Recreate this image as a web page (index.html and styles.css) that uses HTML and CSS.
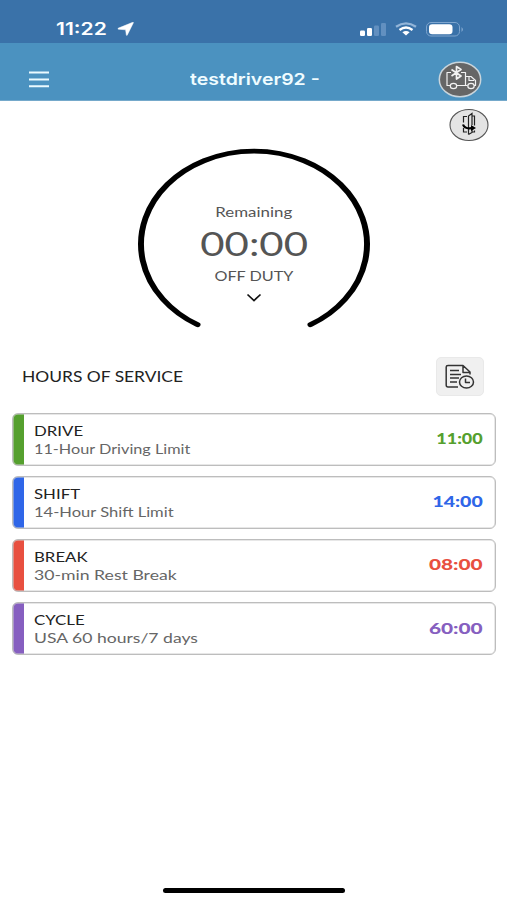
FILE: index.html
```html
<!DOCTYPE html>
<html lang="en">
<head>
<meta charset="utf-8">
<title>Hours of Service</title>
<link rel="stylesheet" href="styles.css">
</head>
<body>
<div class="status">
  <span class="wide clock">11:22</span>
  <svg class="arrow" width="18" height="14" viewBox="0 0 18 14"><path d="M16.500 .6 10.200 13.200Q9.600 13.800 9.300 12.800L8.600 7.800 1.400 7.200Q.2 6.700 1.500 6.100L15.800 .3Z" fill="#fff" stroke="#fff" stroke-width=".5"/></svg>
  <svg class="signals" width="106" height="18" viewBox="0 0 106 18">
    <g fill="#fff"><rect x="0" y="9.500" width="5" height="5.500" rx="1.200"/><rect x="7" y="7" width="5" height="8" rx="1.200"/></g>
    <g fill="#6290c0"><rect x="14" y="4.500" width="5" height="10.500" rx="1.200"/><rect x="21" y="2" width="5" height="13" rx="1.200"/></g>
    <g fill="none" stroke="#fff" stroke-width="2.300"><path d="M36 5.700Q46 -1 56 5.700" stroke="#93b5d8"/><path d="M39.500 9Q46 4 52.500 9"/></g>
    <path d="M42.400 11.200Q46 8.700 49.600 11.200L46 14.500Z" fill="#fff"/>
    <rect x="66.500" y="1.500" width="33" height="13.500" rx="4.500" fill="none" stroke="#7ea5ce"/>
    <rect x="69" y="3.300" width="23.500" height="10" rx="3.200" fill="#fff"/>
    <path d="M101.500 6Q104.500 8.500 101.500 11Z" fill="#7ea5ce"/>
  </svg>
</div>
<header class="bar">
  <svg class="menu" width="20" height="17" viewBox="0 0 20 17"><path d="M0 1.500H20M0 8.500H20M0 15.200H20" stroke="#eafaff" stroke-width="2"/></svg>
  <span class="wide title">testdriver92 -</span>
  <svg class="truck" width="44" height="37" viewBox="0 0 44 37">
    <ellipse cx="22" cy="18.500" rx="20.700" ry="17.200" fill="#666" stroke="#c9d5dc" stroke-width="1.500"/>
    <g fill="none" stroke="#f2f2f2" stroke-width="1.200" stroke-linejoin="round">
      <path d="M13 11.500H9V24.500H12M19 24.500H29.500M23 11.500H27.500V24.500M27.500 15.500H33L37.500 19.500V24.500H36M31 16V19.500H36"/>
      <ellipse cx="15.500" cy="25" rx="3.200" ry="2.700"/><ellipse cx="33" cy="25" rx="3.200" ry="2.700"/>
      <path d="M13.500 8.500 23 15 18.500 18V5.500L23 8.500 13.500 15" stroke-width="1.700"/>
    </g>
  </svg>
</header>
<div class="tools">
  <svg width="40" height="34" viewBox="0 0 40 34">
    <ellipse cx="20" cy="17" rx="19" ry="15.500" fill="#e4e4e4" stroke="#555" stroke-width="1.100"/>
    <g fill="none" stroke="#222" stroke-width="1.200">
      <path d="M18 8.500H14.500V14.500M14.500 20V24H18M19.500 26.500V8L23 5.500V17M19.500 26.500 23 24.500V22M23 8H25.500V17.500M25.500 22.500V24H23"/>
      <path d="M14 16.500Q15.500 21 22.500 20.200" stroke="#000" stroke-width="2.200"/><path d="M22 17 27 20 22 23Z" fill="#000" stroke="none"/>
    </g>
  </svg>
</div>
<section class="dial">
  <svg class="ring" width="240" height="184" viewBox="0 0 240 184"><path transform="translate(120 98) scale(1.215 1)" d="M-46.500 80.700A93 93 0 1 1 46.500 80.700" fill="none" stroke="#000" stroke-width="4.900" stroke-linecap="round"/></svg>
  <div class="readout">
    <span class="wide remaining">Remaining</span>
    <span class="wide time">00:00</span>
    <span class="wide duty">OFF DUTY</span>
    <svg class="chevron" width="16" height="10" viewBox="0 0 16 10"><path d="M1.500 1.500 8 7.500 14.500 1.500" fill="none" stroke="#111" stroke-width="1.700"/></svg>
  </div>
</section>
<div class="heading">
  <span class="wide hos">HOURS OF SERVICE</span>
  <button class="log" aria-label="Logs">
    <svg width="30" height="26" viewBox="0 0 30 26"><g fill="none" stroke="#333" stroke-width="1.500" stroke-linejoin="round">
      <path d="M13 23H3Q1.200 23 1.200 21V3Q1.200 1.500 3 1.500H18L25 8V10.500M18 1.500V8.500H25M5 6.500H14M5 10.500H16M5 14H14M5 18H12"/>
      <ellipse cx="21.500" cy="18" rx="7" ry="6"/><path d="M20.500 14.500V18.500H25"/>
    </g></svg>
  </button>
</div>
<main class="cards">
  <article class="card drive"><div class="info"><span class="wide name">DRIVE</span><span class="wide note">11-Hour Driving Limit</span></div><span class="wide value">11:00</span></article>
  <article class="card shift"><div class="info"><span class="wide name">SHIFT</span><span class="wide note">14-Hour Shift Limit</span></div><span class="wide value">14:00</span></article>
  <article class="card break"><div class="info"><span class="wide name">BREAK</span><span class="wide note">30-min Rest Break</span></div><span class="wide value">08:00</span></article>
  <article class="card cycle"><div class="info"><span class="wide name">CYCLE</span><span class="wide note">USA 60 hours/7 days</span></div><span class="wide value">60:00</span></article>
</main>
<footer class="home"><div class="indicator"></div></footer>
</body>
</html>
```
FILE: styles.css
```css
* { box-sizing: border-box; }
body {
  margin: 0;
  width: 507px;
  height: 900px;
  overflow: hidden;
  display: flex;
  flex-direction: column;
  background: #fff;
  font-family: Lato, "Liberation Sans", sans-serif;
}
svg { display: block; flex: none; }
.wide {
  display: inline-block;
  white-space: nowrap;
  transform: scaleX(var(--stretch, 1.2));
  transform-origin: left center;
}
.status {
  flex: none;
  height: 43px;
  padding: 15px 41px 0 56px;
  display: flex;
  align-items: flex-start;
  background: #3a72a9;
  color: #fff;
}
.clock { width: 61px; font: 600 17px/28px Inter, sans-serif; --stretch: 1.24; }
.arrow { margin-top: 7px; }
.signals { margin: 6px 0 0 auto; }
.bar {
  flex: none;
  height: 58px;
  padding: 0 25px 0 29px;
  display: flex;
  align-items: center;
  justify-content: space-between;
  background: #4b92c0;
  border-bottom: 1px solid #75a9cb;
  color: #effcff;
}
.menu { margin: 15px 24px 0 0; }
.title { margin: 15px 2px 0 0; font: 600 16.5px/22px Inter, sans-serif; transform-origin: center; --stretch: 1.18; }
.truck { margin-top: 15px; }
.tools { display: flex; justify-content: flex-end; height: 45px; padding: 7px 18px 0 0; }
.dial { display: grid; justify-items: center; height: 186px; }
.ring, .readout { grid-area: 1 / 1; }
.readout { display: flex; flex-direction: column; align-items: center; padding-top: 57px; color: #555; }
.readout .wide { transform-origin: center; }
.remaining { font-size: 13.5px; line-height: 18px; --stretch: 1.25; }
.time { font-size: 32px; line-height: 38px; margin: 4px 0 0 1px; --stretch: 1.31; }
.duty { font-size: 13.5px; line-height: 18px; margin-top: 4px; }
.chevron { margin-top: 8px; }
.heading { display: flex; justify-content: space-between; padding: 25px 23px 0 22px; height: 80.5px; color: #222; }
.hos { font-size: 14.5px; line-height: 39px; }
.log {
  width: 48px;
  height: 39px;
  padding: 0;
  border: 1px solid #e9e9e9;
  border-radius: 5px;
  background: #f0f0f0;
  display: grid;
  place-items: center;
}
.cards { display: flex; flex-direction: column; gap: 10.2px; padding: 0 11px 0 12px; }
.card {
  height: 53px;
  display: flex;
  align-items: center;
  justify-content: space-between;
  padding-right: 12px;
  border: 1px solid #bdbdbd;
  border-radius: 6px;
  box-shadow: inset 0 0 0 .5px #d0d0d0;
  background: linear-gradient(90deg, var(--tone) 11px, #fff 11px);
}
.info { display: flex; flex-direction: column; align-items: flex-start; padding-left: 21px; }
.name { font-size: 14px; line-height: 18px; color: #222; }
.note { font-size: 14px; line-height: 17px; color: #666; }
.value { font-size: 15px; line-height: 18px; margin-bottom: 2px; font-weight: 900; color: var(--tone); transform-origin: right center; }
.drive { --tone: #55a02e; }
.drive .note { --stretch: 1.16; }
.shift { --tone: #2f66e8; }
.shift .note { --stretch: 1.18; }
.shift .value { --stretch: 1.3; }
.break { --tone: #e85040; }
.break .note { --stretch: 1.26; }
.cycle { --tone: #865fc0; }
.cycle .note { --stretch: 1.255; }
.break .value, .cycle .value { --stretch: 1.39; }
.home { margin-top: auto; display: flex; justify-content: center; padding-bottom: 7.500px; }
.indicator { width: 182px; height: 5px; border-radius: 3px; background: #000; }
```
